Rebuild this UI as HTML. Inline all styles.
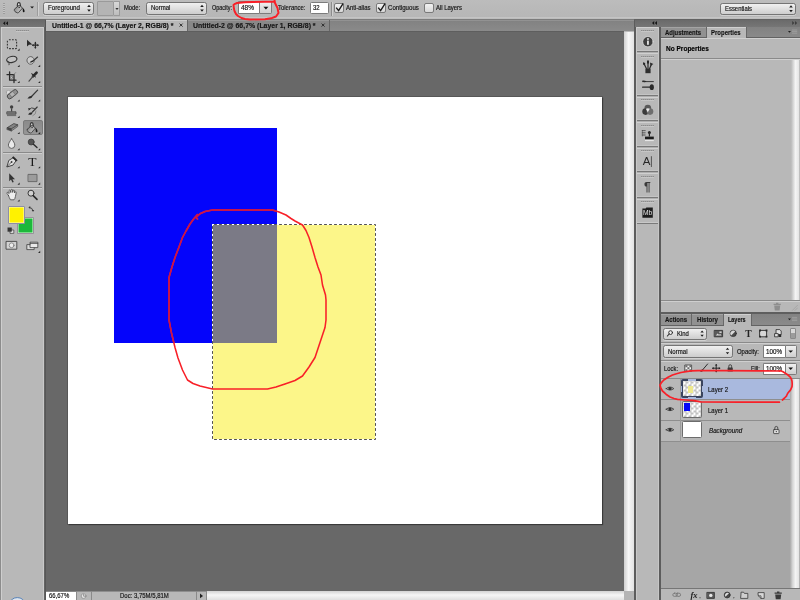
<!DOCTYPE html>
<html lang="en">
<head>
<meta charset="utf-8">
<title>Photoshop - paint bucket opacity</title>
<style>
html,body{margin:0;padding:0;}
body{width:800px;height:600px;overflow:hidden;background:#b8b8b8;font-family:"Liberation Sans",sans-serif;}
#app{position:relative;width:800px;height:600px;overflow:hidden;background:#b8b8b8;}
#app div{position:absolute;box-sizing:border-box;}
#app #texts{position:absolute;}
#icons,#annot{position:absolute;left:0;top:0;pointer-events:none;}
.t{-webkit-text-stroke:0.17px currentColor;position:absolute;white-space:pre;line-height:normal;transform-origin:0 50%;font-family:"Liberation Sans",sans-serif;}
.sel{border:1px solid #757575;border-radius:2.5px;background:linear-gradient(#f0f0f0,#cdcdcd);box-shadow:0 1px 0 rgba(255,255,255,.35);}
.inp{border:1px solid #7c7c7c;border-right:none;background:#fff;border-radius:1.5px 0 0 1.5px;}
.btn{border:1px solid #7c7c7c;background:linear-gradient(#f0f0f0,#cfcfcf);border-radius:0 1.5px 1.5px 0;}
.chk{border:1px solid #7a7a7a;border-radius:2px;background:linear-gradient(#f2f2f2,#d6d6d6);}
.hdr{background:linear-gradient(#6a6a6a,#767676);}
.tabbar{background:linear-gradient(#828282,#8a8a8a);}
.tab{background:#888;}
.tab.on{background:#b8b8b8;}
.vsep{background:#8c8c8c;width:1px;box-shadow:1px 0 0 #d0d0d0;}
.hsep{background:#8a8a8a;height:1px;box-shadow:0 1px 0 #cfcfcf;}
.grip{height:1px;background:repeating-linear-gradient(90deg,#8c8c8c 0 1.5px,#a2a2a2 1.5px 2px);box-shadow:0 1px 0 #c6c6c6;}
.vscroll{background:linear-gradient(90deg,#cfcfcf,#f6f6f6 45%,#e2e2e2);}
.hscroll{background:linear-gradient(#d4d4d4,#f6f6f6 45%,#e0e0e0);}
.dock{background:#b8b8b8;border-top:1px solid #d0d0d0;}
.thumb{border:1px solid #6c6c6c;border-radius:1.5px;background:#fff;}
.checker{background:conic-gradient(#c2c2c2 25%,#fff 0 50%,#c2c2c2 0 75%,#fff 0) 0.5px 0.5px/5px 5px;}
.t.b{-webkit-text-stroke:0.16px currentColor;}
#texts{position:absolute;left:0;top:0;width:800px;height:600px;filter:blur(0.3px);}
#icons{filter:blur(0.35px);}
#annot{filter:blur(0.3px);}

</style>
</head>
<body>
<div id="app">
<!-- ===== options bar ===== -->
<div id="optbar" style="left:0;top:0;width:800px;height:18px;background:linear-gradient(#bcbcbc,#b6b6b6);"></div>
<div style="left:0;top:17px;width:800px;height:1px;background:#c4c4c4;"></div>
<div style="left:0;top:18px;width:800px;height:1px;background:#bdbdbd;"></div>
<div style="left:0;top:19px;width:800px;height:1px;background:#7c7c7c;"></div>
<div style="left:0;top:19px;width:46px;height:1px;background:#6a6a6a;"></div>
<div style="left:634px;top:19px;width:166px;height:1px;background:#626262;"></div>
<div class="grip" style="left:3px;top:3px;width:2px;height:11px;background:repeating-linear-gradient(#9c9c9c 0 1px,#c4c4c4 1px 2px);box-shadow:none;"></div>
<div class="vsep" style="left:37px;top:2px;height:14px;background:#9c9c9c;"></div>
<div class="sel" style="left:42.5px;top:2px;width:51.5px;height:13px;"></div>
<div style="left:97px;top:1px;width:17px;height:15px;border:1px solid #9a9a9a;background:#b4b4b4;border-radius:1px;"></div>
<div style="left:114px;top:1px;width:6px;height:15px;border:1px solid #9a9a9a;border-left:none;background:linear-gradient(#d8d8d8,#bdbdbd);border-radius:0 1px 1px 0;"></div>
<div class="sel" style="left:146px;top:2px;width:61px;height:13px;"></div>
<div class="inp" style="left:238px;top:1px;width:21px;height:13px;"></div>
<div class="btn" style="left:259px;top:1px;width:13px;height:13px;"></div>
<div class="inp" style="left:310px;top:2px;width:19px;height:12px;border-right:1px solid #7c7c7c;border-radius:1.5px;"></div>
<div class="vsep" style="left:331px;top:2px;height:14px;"></div>
<div class="chk" style="left:334px;top:3px;width:10px;height:10px;"></div>
<div class="chk" style="left:376px;top:3px;width:10px;height:10px;"></div>
<div class="chk" style="left:424px;top:3px;width:10px;height:10px;"></div>
<div class="sel" style="left:720px;top:3px;width:76px;height:12px;"></div>

<!-- ===== document tab bar ===== -->
<div class="tabbar" style="left:46px;top:20px;width:588px;height:11px;border-top:1px solid #929292;"></div>
<div class="tab on" style="left:46px;top:20px;width:141px;height:11px;border-top:1px solid #cdcdcd;"></div>
<div class="tab" style="left:188px;top:20px;width:141px;height:11px;border-top:1px solid #9a9a9a;"></div>
<div style="left:187px;top:20px;width:1px;height:11px;background:#666;"></div>
<div style="left:329px;top:20px;width:1px;height:11px;background:#666;"></div>

<!-- ===== document area ===== -->
<div id="doc" style="left:46px;top:31px;width:578px;height:560px;background:#686868;"></div>
<div style="left:46px;top:31px;width:578px;height:1px;background:#5e5e5e;"></div>
<div id="canvas" style="left:68px;top:97px;width:534px;height:427px;background:#fff;box-shadow:0 0 0 1px rgba(50,50,50,.3),1px 1px 1px rgba(0,0,0,.4);"></div>
<div id="blue" style="left:114px;top:128px;width:163px;height:215px;background:#0404fb;"></div>
<div id="yellow" style="left:212px;top:224px;width:163px;height:215px;background:#fcf689;"></div>
<div id="overlap" style="left:212px;top:224px;width:65px;height:119px;background:#7b7a86;"></div>

<!-- scrollbars + status bar -->
<div class="vscroll" style="left:624px;top:32px;width:10px;height:559px;"></div>
<div style="left:46px;top:591px;width:588px;height:9px;background:#b8b8b8;border-top:1px solid #8e8e8e;"></div>
<div style="left:46px;top:591px;width:30px;height:9px;background:#fff;border-top:1px solid #888;"></div>
<div style="left:76px;top:591px;width:1px;height:9px;background:#8a8a8a;"></div>
<div style="left:91px;top:591px;width:1px;height:9px;background:#8a8a8a;"></div>
<div style="left:196px;top:591px;width:1px;height:9px;background:#8a8a8a;"></div>
<div style="left:206px;top:591px;width:1px;height:9px;background:#8a8a8a;"></div>
<div class="hscroll" style="left:207px;top:591px;width:417px;height:9px;"></div>
<div style="left:624px;top:591px;width:10px;height:9px;background:#b4b4b4;"></div>

<!-- ===== toolbox ===== -->
<div id="toolbox" style="left:0;top:20px;width:44px;height:580px;background:#b8b8b8;border-left:1px solid #8c8c8c;"></div>
<div style="left:44px;top:20px;width:2px;height:580px;background:linear-gradient(90deg,#6e6e6e,#555 60%,#5a5a5a);"></div>
<div style="left:1px;top:27px;width:43px;height:1px;background:#cdcdcd;"></div>
<div style="left:1px;top:27px;width:1px;height:573px;background:#cecece;"></div>
<div style="left:43px;top:27px;width:1px;height:573px;background:#c9c9c9;"></div>
<div class="hdr" style="left:0;top:20px;width:45px;height:7px;"></div>
<div class="grip" style="left:16px;top:30px;width:13px;"></div>
<div class="hsep" style="left:3px;top:86px;width:39px;"></div>
<div class="hsep" style="left:3px;top:152px;width:39px;"></div>
<div class="hsep" style="left:3px;top:187px;width:39px;"></div>
<div id="toolsel" style="left:23px;top:120px;width:20px;height:15px;background:linear-gradient(#8a8a8a,#969696);border:1px solid #7a7a7a;border-radius:2px;"></div>
<div style="left:17px;top:216.5px;width:17px;height:17px;background:#1db83b;border:1px solid #9a8f9c;border-radius:1px;box-shadow:inset 0 0 0 0.5px #d8ffd8;"></div>
<div style="left:8px;top:206px;width:17px;height:17.5px;background:#fff200;border:1px solid #8d8da8;border-radius:1px;box-shadow:inset 0 0 0 0.5px #ffffc0;"></div>

<!-- ===== icon dock ===== -->
<div style="left:634px;top:20px;width:2px;height:580px;background:linear-gradient(90deg,#5c5c5c 0 75%,#8a8a8a);"></div>
<div style="left:636px;top:27px;width:1px;height:573px;background:#c8c8c8;z-index:1;"></div>
<div style="left:658px;top:27px;width:1px;height:573px;background:#c6c6c6;z-index:1;"></div>
<div style="left:636px;top:20px;width:23px;height:580px;background:#b8b8b8;"></div>
<div class="hdr" style="left:635px;top:20px;width:165px;height:7px;"></div>
<div style="left:659px;top:27px;width:2px;height:573px;background:linear-gradient(90deg,#5c5c5c 0 75%,#8a8a8a);"></div>
<div class="dock" style="left:636px;top:27px;width:23px;height:24px;"></div>
<div style="left:636px;top:51px;width:23px;height:2px;background:linear-gradient(#787878 0 50%,#aeaeae 50% 100%);box-shadow:0 -1px 0 #c4c4c4;"></div>
<div class="dock" style="left:636px;top:53px;width:23px;height:42px;"></div>
<div style="left:636px;top:95px;width:23px;height:2px;background:linear-gradient(#787878 0 50%,#aeaeae 50% 100%);box-shadow:0 -1px 0 #c4c4c4;"></div>
<div class="dock" style="left:636px;top:97px;width:23px;height:23px;"></div>
<div style="left:636px;top:120px;width:23px;height:2px;background:linear-gradient(#787878 0 50%,#aeaeae 50% 100%);box-shadow:0 -1px 0 #c4c4c4;"></div>
<div class="dock" style="left:636px;top:122px;width:23px;height:24px;"></div>
<div style="left:636px;top:146px;width:23px;height:2px;background:linear-gradient(#787878 0 50%,#aeaeae 50% 100%);box-shadow:0 -1px 0 #c4c4c4;"></div>
<div class="dock" style="left:636px;top:148px;width:23px;height:23px;"></div>
<div style="left:636px;top:171px;width:23px;height:2px;background:linear-gradient(#787878 0 50%,#aeaeae 50% 100%);box-shadow:0 -1px 0 #c4c4c4;"></div>
<div class="dock" style="left:636px;top:173px;width:23px;height:24px;"></div>
<div style="left:636px;top:197px;width:23px;height:2px;background:linear-gradient(#787878 0 50%,#aeaeae 50% 100%);box-shadow:0 -1px 0 #c4c4c4;"></div>
<div class="dock" style="left:636px;top:199px;width:23px;height:24px;"></div>
<div style="left:636px;top:223px;width:23px;height:1px;background:#7a7a7a;box-shadow:0 -1px 0 #c8c8c8;"></div>
<div class="grip" style="left:641px;top:30px;width:13px;"></div>
<div class="grip" style="left:641px;top:56px;width:13px;"></div>
<div class="grip" style="left:641px;top:99px;width:13px;"></div>
<div class="grip" style="left:641px;top:125px;width:13px;"></div>
<div class="grip" style="left:641px;top:150px;width:13px;"></div>
<div class="grip" style="left:641px;top:176px;width:13px;"></div>
<div class="grip" style="left:641px;top:201px;width:13px;"></div>

<!-- ===== properties panel ===== -->
<div style="left:661px;top:27px;width:139px;height:286px;background:#b8b8b8;"></div>
<div class="tabbar" style="left:661px;top:27px;width:139px;height:10px;"></div>
<div class="tab" style="left:661px;top:27px;width:46px;height:10px;background:#919191;border-top:1px solid #a4a4a4;"></div>
<div class="tab on" style="left:707px;top:27px;width:39px;height:11px;border-top:1px solid #d0d0d0;"></div>
<div style="left:706px;top:27px;width:1px;height:10px;background:#686868;"></div>
<div style="left:745.5px;top:27px;width:1px;height:10px;background:#686868;"></div>
<div style="left:661px;top:37px;width:46px;height:1px;background:#636363;"></div>
<div style="left:746px;top:37px;width:54px;height:1px;background:#636363;"></div>
<div style="left:661px;top:38px;width:139px;height:1px;background:#d0d0d0;"></div>
<div class="hsep" style="left:661px;top:58px;width:139px;"></div>
<div class="vscroll" style="left:791px;top:60px;width:9px;height:240px;background:linear-gradient(90deg,#b8b8b8,#f4f4f4 50%,#e6e6e6 85%,#a8a8a8);"></div>
<div class="hsep" style="left:661px;top:300px;width:139px;"></div>
<div style="left:661px;top:312px;width:139px;height:2px;background:#5e5e5e;"></div>

<!-- ===== layers panel ===== -->
<div style="left:661px;top:314px;width:139px;height:286px;background:#b8b8b8;"></div>
<div class="tabbar" style="left:661px;top:314px;width:139px;height:11px;"></div>
<div class="tab" style="left:661px;top:314px;width:30px;height:11px;background:#919191;border-top:1px solid #a4a4a4;"></div>
<div class="tab" style="left:692px;top:314px;width:32px;height:11px;background:#919191;border-top:1px solid #a4a4a4;"></div>
<div class="tab on" style="left:724px;top:314px;width:27px;height:12px;border-top:1px solid #d0d0d0;"></div>
<div style="left:691px;top:314px;width:1px;height:11px;background:#686868;"></div>
<div style="left:723px;top:314px;width:1px;height:11px;background:#686868;"></div>
<div style="left:750.5px;top:314px;width:1px;height:11px;background:#686868;"></div>
<div style="left:661px;top:325px;width:63px;height:1px;background:#636363;"></div>
<div style="left:751px;top:325px;width:49px;height:1px;background:#636363;"></div>
<div class="sel" style="left:663px;top:328px;width:44px;height:12px;"></div>
<div style="left:790px;top:328px;width:6px;height:11px;border:1px solid #8a8a8a;border-radius:1px;background:linear-gradient(#d8d8d8 0 45%,#9c9c9c 50% 100%);"></div>
<div class="hsep" style="left:661px;top:342px;width:139px;"></div>
<div class="sel" style="left:663px;top:345px;width:70px;height:13px;"></div>
<div class="inp" style="left:763px;top:345px;width:21.5px;height:13px;"></div>
<div class="btn" style="left:784.5px;top:345px;width:12.5px;height:13px;"></div>
<div class="hsep" style="left:661px;top:360px;width:139px;"></div>
<div class="inp" style="left:763px;top:362.5px;width:21.5px;height:12.5px;"></div>
<div class="btn" style="left:784.5px;top:362.5px;width:12.5px;height:12.5px;"></div>
<div style="left:661px;top:377.5px;width:139px;height:1px;background:#8a8a8a;"></div>
<!-- rows -->
<div style="left:661px;top:378.5px;width:130px;height:63px;background:#b8b8b8;"></div>
<div style="left:680px;top:378.5px;width:110px;height:20.5px;background:#a9b9de;"></div>
<div style="left:661px;top:399px;width:130px;height:1px;background:#8e8e8e;"></div>
<div style="left:661px;top:420px;width:130px;height:1px;background:#8e8e8e;"></div>
<div style="left:661px;top:441px;width:130px;height:1px;background:#8e8e8e;"></div>
<div style="left:679.5px;top:378.5px;width:1px;height:63px;background:#9c9c9c;"></div>
<div style="left:661px;top:442px;width:130px;height:146px;background:#a6a6a6;"></div>
<div class="vscroll" style="left:790px;top:379px;width:10px;height:209px;background:linear-gradient(90deg,#a8a8a8,#d4d4d4 25%,#f4f4f4 55%,#e6e6e6 85%,#9a9a9a);"></div>
<div style="left:661px;top:588px;width:139px;height:1px;background:#767676;"></div>
<div style="left:661px;top:589px;width:139px;height:11px;background:#b8b8b8;"></div>
<!-- thumbnails -->
<div class="thumb checker" style="left:680.5px;top:379px;width:22.5px;height:19px;border:2px solid #3a445e;border-radius:2px;"></div>
<div style="left:688px;top:379px;width:8px;height:1.5px;background:#a9b9de;"></div>
<div style="left:688px;top:396.5px;width:8px;height:1.5px;background:#a9b9de;"></div>
<div style="left:680.5px;top:385.5px;width:1.5px;height:6px;background:#a9b9de;"></div>
<div style="left:701.5px;top:385.5px;width:1.5px;height:6px;background:#a9b9de;"></div>
<div style="left:687.5px;top:385.7px;width:5.5px;height:7.3px;background:#efe98e;"></div>
<div class="thumb checker" style="left:681.5px;top:401px;width:20.5px;height:17px;"></div>
<div style="left:684px;top:403.2px;width:6px;height:7.5px;background:#0606f6;"></div>
<div class="thumb" style="left:681.5px;top:421.2px;width:20.5px;height:17.3px;"></div>

<div id="texts">
<span class="t" style="left:48.0px;top:4.0px;font-size:6.8px;color:#141414;transform:scaleX(0.911)">Foreground</span>
<span class="t" style="left:124.4px;top:4.0px;font-size:6.8px;color:#141414;transform:scaleX(0.858)">Mode:</span>
<span class="t" style="left:150.6px;top:4.0px;font-size:6.8px;color:#141414;transform:scaleX(0.886)">Normal</span>
<span class="t" style="left:212.0px;top:4.0px;font-size:6.8px;color:#141414;transform:scaleX(0.802)">Opacity:</span>
<span class="t" style="left:241.0px;top:4.0px;font-size:6.8px;color:#141414;transform:scaleX(0.955)">48%</span>
<span class="t" style="left:277.5px;top:4.0px;font-size:6.8px;color:#141414;transform:scaleX(0.877)">Tolerance:</span>
<span class="t" style="left:313.0px;top:4.0px;font-size:6.8px;color:#141414;transform:scaleX(0.873)">32</span>
<span class="t" style="left:346.0px;top:4.0px;font-size:6.8px;color:#141414;transform:scaleX(0.880)">Anti-alias</span>
<span class="t" style="left:388.0px;top:4.0px;font-size:6.8px;color:#141414;transform:scaleX(0.896)">Contiguous</span>
<span class="t" style="left:436.0px;top:4.0px;font-size:6.8px;color:#141414;transform:scaleX(0.871)">All Layers</span>
<span class="t" style="left:725.0px;top:5.0px;font-size:6.8px;color:#141414;transform:scaleX(0.871)">Essentials</span>
<span class="t b" style="left:52.0px;top:21.8px;font-size:7px;font-weight:bold;color:#141414;transform:scaleX(0.980)">Untitled-1 @ 66,7% (Layer 2, RGB/8) *</span>
<span class="t b" style="left:193.0px;top:21.8px;font-size:7px;font-weight:bold;color:#161616;transform:scaleX(0.989)">Untitled-2 @ 66,7% (Layer 1, RGB/8) *</span>
<span class="t b" style="left:665.0px;top:28.5px;font-size:7px;font-weight:bold;color:#161616;transform:scaleX(0.849)">Adjustments</span>
<span class="t b" style="left:711.0px;top:28.5px;font-size:7px;font-weight:bold;color:#141414;transform:scaleX(0.855)">Properties</span>
<span class="t b" style="left:666.0px;top:45.0px;font-size:7px;font-weight:bold;color:#000;transform:scaleX(0.932)">No Properties</span>
<span class="t b" style="left:665.0px;top:316.3px;font-size:7px;font-weight:bold;color:#161616;transform:scaleX(0.857)">Actions</span>
<span class="t b" style="left:697.0px;top:316.3px;font-size:7px;font-weight:bold;color:#161616;transform:scaleX(0.870)">History</span>
<span class="t b" style="left:728.0px;top:316.3px;font-size:7px;font-weight:bold;color:#141414;transform:scaleX(0.780)">Layers</span>
<span class="t" style="left:677.0px;top:330.0px;font-size:6.8px;color:#141414;transform:scaleX(0.867)">Kind</span>
<span class="t" style="left:668.0px;top:347.5px;font-size:6.8px;color:#141414;transform:scaleX(0.890)">Normal</span>
<span class="t" style="left:737.0px;top:347.5px;font-size:6.8px;color:#141414;transform:scaleX(0.874)">Opacity:</span>
<span class="t" style="left:766.0px;top:347.5px;font-size:6.8px;color:#141414;transform:scaleX(0.920)">100%</span>
<span class="t" style="left:664.0px;top:365.0px;font-size:6.8px;color:#141414;transform:scaleX(0.862)">Lock:</span>
<span class="t" style="left:750.6px;top:364.5px;font-size:6.8px;color:#141414;transform:scaleX(0.832)">Fill:</span>
<span class="t" style="left:766.0px;top:364.5px;font-size:6.8px;color:#141414;transform:scaleX(0.920)">100%</span>
<span class="t" style="left:708.0px;top:385.9px;font-size:6.8px;color:#141414;transform:scaleX(0.882)">Layer 2</span>
<span class="t" style="left:708.0px;top:406.5px;font-size:6.8px;color:#141414;transform:scaleX(0.882)">Layer 1</span>
<span class="t" style="left:708.8px;top:427.1px;font-size:6.8px;font-style:italic;color:#141414;transform:scaleX(0.915)">Background</span>
<span class="t" style="left:48.8px;top:592.1px;font-size:6.8px;color:#141414;transform:scaleX(0.876)">66,67%</span>
<span class="t" style="left:120.0px;top:592.1px;font-size:6.8px;color:#141414;transform:scaleX(0.879)">Doc: 3,75M/5,81M</span>
</div>
<svg id="icons" width="800" height="600" viewBox="0 0 800 600">
<linearGradient id="bk" x1="0" y1="0" x2="1" y2="0.6"><stop offset="0" stop-color="#6e6e6e"/><stop offset="0.55" stop-color="#a8a8a8"/><stop offset="1" stop-color="#c8c8c8"/></linearGradient>
<!-- ================= OPTIONS BAR ICONS ================= -->
<g id="opt-icons">
  <!-- paint bucket (tool preset) -->
  <g transform="translate(13.5,1.5)">
    <path d="M0.9 7.7 L5.1 4.1 Q5.9 3.7 6.5 4.3 L8.5 5.9 Q8.9 6.5 8.5 7.1 L5.1 11.1 Q4.5 11.5 3.7 11.3 L1.5 10.1 Q0.5 9.1 0.9 7.7 Z" fill="url(#bk)" stroke="#3c3c3c" stroke-width="0.9"/>
    <path d="M3.7 4.9 L4.1 1.9 Q5.3 0.1 6.5 1.7 L7.1 4.5" fill="none" stroke="#333" stroke-width="1.1"/>
    <path d="M4.5 3.4 L5.1 2 L5.9 3.4 Z" fill="#e4e4e4"/>
    <circle cx="5.7" cy="5.9" r="0.7" fill="#2a2a2a"/>
    <path d="M8.3 5.9 Q11.1 6.9 11.1 9.9 Q10.9 10.9 9.9 10.7 Q8.9 10.1 9.3 8.5 Q9.5 7.1 8.3 5.9 Z" fill="#111"/>
  </g>
  <path d="M30.2 6.5 h3.8 l-1.9 2.1 z" fill="#1a1a1a"/>
  <!-- select arrows -->
  <path d="M87.2 7 l1.8 -2.2 l1.8 2.2 z M87.2 9.6 l1.8 2.2 l1.8 -2.2 z" fill="#1c1c1c"/>
  <path d="M115.4 8 h3.2 l-1.6 2 z" fill="#333"/>
  <path d="M200.2 7 l1.8 -2.2 l1.8 2.2 z M200.2 9.6 l1.8 2.2 l1.8 -2.2 z" fill="#1c1c1c"/>
  <path d="M263.4 6.8 h5 l-2.5 2.6 z" fill="#111"/>
  <path d="M789.2 7.4 l1.8 -2.2 l1.8 2.2 z M789.2 10 l1.8 2.2 l1.8 -2.2 z" fill="#1c1c1c"/>
  <!-- check marks -->
  <path d="M336.2 7.6 L338.6 10.6 L343.2 3.4" fill="none" stroke="#1a1a1a" stroke-width="1.4"/>
  <path d="M378.2 7.6 L380.6 10.6 L385.2 3.4" fill="none" stroke="#1a1a1a" stroke-width="1.4"/>
  <!-- tab close x -->
  <path d="M179.6 23.6 l3 3 m0 -3 l-3 3" stroke="#222" stroke-width="0.9" fill="none"/>
  <path d="M321.6 23.6 l3 3 m0 -3 l-3 3" stroke="#222" stroke-width="0.9" fill="none"/>
  <!-- collapse chevrons -->
  <path d="M5.2 21.2 l-2.2 2 l2.2 2 z M8 21.2 l-2.2 2 l2.2 2 z" fill="#161616"/>
  <path d="M654.2 21 l-2.2 2 l2.2 2 z M657 21 l-2.2 2 l2.2 2 z" fill="#161616"/>
  <path d="M792.2 21 l2.2 2 l-2.2 2 z M795 21 l2.2 2 l-2.2 2 z" fill="#3e3e3e"/>
</g>
<!-- ================= TOOLBOX ICONS ================= -->
<g id="tool-icons" stroke-linecap="round" stroke-linejoin="round" opacity="0.9">
  <!-- flyout triangles -->
  <g fill="#1a1a1a">
    <path d="M19.6 48.6 v2.1 h-2.1 z"/><path d="M19.6 64.8 v2.1 h-2.1 z"/><path d="M40.2 64.8 v2.1 h-2.1 z"/>
    <path d="M19.6 81.0 v2.1 h-2.1 z"/><path d="M40.2 81.0 v2.1 h-2.1 z"/>
    <path d="M19.6 99.4 v2.1 h-2.1 z"/><path d="M40.2 99.4 v2.1 h-2.1 z"/>
    <path d="M19.6 115.8 v2.1 h-2.1 z"/><path d="M40.2 115.8 v2.1 h-2.1 z"/>
    <path d="M19.6 132.0 v2.1 h-2.1 z"/><path d="M40.2 132.0 v2.1 h-2.1 z"/>
    <path d="M19.6 148.2 v2.1 h-2.1 z"/><path d="M40.2 148.2 v2.1 h-2.1 z"/>
    <path d="M19.6 166.2 v2.1 h-2.1 z"/><path d="M40.2 166.2 v2.1 h-2.1 z"/>
    <path d="M19.6 182.6 v2.1 h-2.1 z"/><path d="M40.2 182.6 v2.1 h-2.1 z"/>
    <path d="M19.6 199.4 v2.1 h-2.1 z"/><path d="M40.2 250.8 v2.1 h-2.1 z"/>
  </g>
  <!-- 1 marquee -->
  <rect x="7.4" y="39.8" width="9.2" height="8.8" rx="1" fill="none" stroke="#262626" stroke-width="1.1" stroke-dasharray="1.7 1.3" stroke-dashoffset="-0.6" stroke-linecap="butt"/>
  <!-- 2 move -->
  <path d="M27 39.8 L27 46.4 L29 44.8 L32.4 44.6 Z" fill="#1c1c1c"/>
  <path d="M35.4 42.4 v5.6 M32.6 45.2 h5.6" stroke="#1c1c1c" stroke-width="1.2" fill="none"/>
  <path d="M34.2 43.4 l1.2 -1.5 l1.2 1.5 z M34.2 47 l1.2 1.5 l1.2 -1.5 z M33.6 44 l-1.5 1.2 l1.5 1.2 z M37.2 44 l1.5 1.2 l-1.5 1.2 z" fill="#1c1c1c"/>
  <!-- 3 lasso -->
  <ellipse cx="11.8" cy="59.4" rx="5.2" ry="3" fill="#c4c4c4" stroke="#262626" stroke-width="1.2" transform="rotate(-12 11.8 59.4)"/>
  <path d="M8.2 61.4 Q7.2 62.8 8.6 63 Q10 63.2 9 64.8" fill="none" stroke="#2a2a2a" stroke-width="0.9"/>
  <!-- 4 quick select -->
  <ellipse cx="30.6" cy="60.4" rx="3.6" ry="3.8" fill="#cfcfcf" stroke="#333" stroke-width="0.8" stroke-dasharray="1.6 0.9"/>
  <path d="M37.6 57 L33 61" stroke="#2a2a2a" stroke-width="1.1" fill="none"/>
  <path d="M29.6 62.4 Q31 60.2 33.6 60.6 Q33.4 63 29.6 62.4 Z" fill="#1c1c1c"/>
  <!-- 5 crop -->
  <path d="M9.6 72 V80.2 H16 M7 74.6 H14 V82.6" fill="none" stroke="#1c1c1c" stroke-width="1.3"/>
  <path d="M15.6 72.6 L11.6 76.8" stroke="#555" stroke-width="0.6" fill="none"/>
  <circle cx="11.8" cy="77.4" r="1.1" fill="#ddd" stroke="#444" stroke-width="0.5"/>
  <!-- 6 eyedropper -->
  <path d="M36.6 72.6 L33 76.4" stroke="#1a1a1a" stroke-width="2.6" fill="none"/>
  <path d="M34.6 75.2 L31.6 73.8 M35.6 77 L32.4 74.4" stroke="#1a1a1a" stroke-width="1" fill="none"/>
  <path d="M33 76.4 L29 81.2" stroke="#3a3a3a" stroke-width="1.2" fill="none"/>
  <!-- 7 healing brush -->
  <path d="M6.4 92.2 Q6 90.2 8.6 90.4 L10.6 91.4 L8.2 96.2 Q6.6 95 6.4 92.2 Z" fill="#e6e6e6" stroke="#888" stroke-width="0.5"/>
  <g transform="rotate(-38 12.4 94.2)">
    <rect x="6.6" y="91.8" width="11.6" height="4.8" rx="2.2" fill="#8d8d8d" stroke="#3a3a3a" stroke-width="0.9"/>
    <rect x="10.4" y="92.2" width="4" height="4" fill="#b4b4b4" stroke="#555" stroke-width="0.4"/>
  </g>
  <!-- 8 brush -->
  <path d="M37.6 90.2 L32 96" stroke="#2a2a2a" stroke-width="1.2" fill="none"/>
  <path d="M27.4 98.4 Q29 95.6 32.2 95.8 Q32.6 99.2 27.4 98.4 Z" fill="#1c1c1c"/>
  <!-- 9 clone stamp -->
  <circle cx="11.6" cy="107" r="1.7" fill="#333"/>
  <path d="M11 108.4 h1.2 v3 h-1.2 z" fill="#333"/>
  <path d="M7.2 111.8 h8.8 v2.4 h-8.8 z" fill="#7a7a7a" stroke="#333" stroke-width="0.8"/>
  <path d="M7.4 115.6 h8.4" stroke="#555" stroke-width="0.9"/>
  <!-- 10 history brush -->
  <path d="M37.2 107 L32.4 112" stroke="#2a2a2a" stroke-width="1.1" fill="none"/>
  <path d="M28 114.6 Q29.4 112 32.4 112.2 Q32.6 115.4 28 114.6 Z" fill="#1c1c1c"/>
  <path d="M29 109.6 Q31.4 106.6 34.4 108.4" fill="none" stroke="#2a2a2a" stroke-width="0.9"/>
  <path d="M28.2 108 l2.4 0.6 l-1.8 1.8 z" fill="#1c1c1c"/>
  <path d="M36 111 Q36.2 114.6 32.8 115.8" fill="none" stroke="#666" stroke-width="0.6"/>
  <!-- 11 eraser -->
  <path d="M7.4 127.6 L13.8 123.6 L17.8 124.8 L11.6 128.8 Z" fill="#7e7e7e" stroke="#333" stroke-width="0.8"/>
  <path d="M7.4 127.6 L11.6 128.8 L11.4 131 L7.2 129.6 Z" fill="#3a3a3a" stroke="#333" stroke-width="0.6"/>
  <path d="M11.6 128.8 L17.8 124.8 L17.6 126.6 L11.4 131 Z" fill="#8a8a8a" stroke="#333" stroke-width="0.6"/>
  <!-- 12 paint bucket (selected) -->
  <g transform="translate(26.4,121.6)">
    <path d="M0.9 7.7 L5.1 4.1 Q5.9 3.7 6.5 4.3 L8.5 5.9 Q8.9 6.5 8.5 7.1 L5.1 11.1 Q4.5 11.5 3.7 11.3 L1.5 10.1 Q0.5 9.1 0.9 7.7 Z" fill="url(#bk)" stroke="#3c3c3c" stroke-width="0.9"/>
    <path d="M3.7 4.9 L4.1 1.9 Q5.3 0.1 6.5 1.7 L7.1 4.5" fill="none" stroke="#333" stroke-width="1.1"/>
    <path d="M4.5 3.4 L5.1 2 L5.9 3.4 Z" fill="#e4e4e4"/>
    <circle cx="5.7" cy="5.9" r="0.7" fill="#2a2a2a"/>
    <path d="M8.3 5.9 Q11.1 6.9 11.1 9.9 Q10.9 10.9 9.9 10.7 Q8.9 10.1 9.3 8.5 Q9.5 7.1 8.3 5.9 Z" fill="#111"/>
  </g>
  <!-- 13 blur -->
  <path d="M11.6 138.8 C9.8 141.4 8.4 143.4 8.4 145.2 A3.2 3.2 0 0 0 14.8 145.2 C14.8 143.4 13.4 141.4 11.6 138.8 Z" fill="#f0f0f0" stroke="#4a4a4a" stroke-width="0.9"/>
  <!-- 14 dodge -->
  <circle cx="31.2" cy="142" r="3" fill="#4a4a4a" stroke="#262626" stroke-width="0.7"/>
  <path d="M33.4 144.2 L37 147.6" stroke="#1c1c1c" stroke-width="1.4" fill="none"/>
  <!-- 15 pen -->
  <path d="M7 166.6 L8.8 160.4 L13 157.8 L16 160.8 L13.2 164.8 Z" fill="#e4e4e4" stroke="#2a2a2a" stroke-width="0.9"/>
  <path d="M13.4 156.2 L17.6 160.2 L16.2 161.6 L12 157.6 Z" fill="#1a1a1a"/>
  <path d="M7.2 166.4 L11.4 162.2" stroke="#2a2a2a" stroke-width="0.7" fill="none"/>
  <circle cx="11.6" cy="162" r="0.9" fill="#2a2a2a"/>
  <!-- 17 path selection -->
  <path d="M9.2 173.2 L9.2 181.2 L11 179.6 L12.4 182.6 L13.8 182 L12.4 179.2 L15 179.2 Z" fill="#262626"/>
  <!-- 18 rectangle -->
  <rect x="28.4" y="174.4" width="8.6" height="7.2" fill="#9a9a9a" stroke="#5a5a5a" stroke-width="0.9"/>
  <!-- 19 hand -->
  <path d="M8.4 195.4 L7 193.4 Q6.6 192.2 7.8 192.4 L9.2 193.6 L9 190.6 Q9.6 189.6 10.4 190.6 L10.8 192.6 L11 189.8 Q11.8 188.8 12.6 189.8 L12.6 192.4 L13.2 190.4 Q14 189.6 14.6 190.6 L14.4 193 L15.4 191.8 Q16.4 191.6 16.2 192.8 L15.4 196.6 Q15 198.8 14 199.8 L10.4 199.8 Q9.2 197.6 8.4 195.4 Z" fill="#f4f4f4" stroke="#3a3a3a" stroke-width="0.8"/>
  <!-- 20 zoom -->
  <circle cx="31" cy="193.2" r="3" fill="#d4d4d4" stroke="#2a2a2a" stroke-width="1"/>
  <path d="M33.2 195.6 L37 199.4" stroke="#1a1a1a" stroke-width="1.6" fill="none"/>
  <!-- swap colours -->
  <path d="M29.4 207.4 Q32.6 207.6 33 210.8" fill="none" stroke="#2a2a2a" stroke-width="0.9"/>
  <path d="M28.4 207.4 l1.8 -1.3 v2.6 z M33 211.8 l-1.3 -1.8 h2.6 z" fill="#2a2a2a"/>
  <!-- default colours -->
  <rect x="10.4" y="230" width="3.4" height="3.4" fill="#e8e8e8" stroke="#333" stroke-width="0.7"/>
  <rect x="8" y="227.8" width="3.6" height="3.6" fill="#2a2a2a" stroke="#2a2a2a" stroke-width="0.5"/>
  <!-- quick mask -->
  <rect x="6.4" y="241.4" width="10.4" height="7.8" fill="#d6d6d6" stroke="#3a3a3a" stroke-width="0.9"/>
  <circle cx="11.6" cy="245.3" r="2.4" fill="#f2f2f2" stroke="#666" stroke-width="0.7"/>
  <!-- screen mode -->
  <rect x="27.2" y="244.6" width="7" height="5" fill="#e0e0e0" stroke="#333" stroke-width="0.8"/>
  <rect x="30.4" y="242.2" width="7.4" height="5.4" fill="#efefef" stroke="#333" stroke-width="0.8"/>
  <path d="M30.4 243.4 h7.4" stroke="#333" stroke-width="0.8"/>
  <!-- peeking ellipse bottom-left -->
  <ellipse cx="17.4" cy="602.6" rx="7" ry="5" fill="#e4eaf4" stroke="#3a6fb0" stroke-width="0.9"/>
</g>
<text x="32.4" y="166.4" text-anchor="middle" font-family="'Liberation Serif',serif" font-size="13.5" fill="#1a1a1a">T</text>
<!-- ================= DOCK ICONS ================= -->
<g id="dock-icons" stroke-linecap="round" stroke-linejoin="round">
  <circle cx="647.9" cy="41.7" r="5" fill="#3e3e3e"/>
  <circle cx="647.9" cy="41.7" r="5.2" fill="none" stroke="#d6d6d6" stroke-width="0.8" opacity=".9"/>
  <rect x="647.1" y="40.6" width="1.7" height="4.2" fill="#f0f0f0"/>
  <rect x="647.1" y="38.2" width="1.7" height="1.6" fill="#f0f0f0"/>
  <!-- brush presets -->
  <path d="M645.4 68.6 h5.2 v4.6 h-5.2 z" fill="#2e2e2e"/>
  <path d="M646.4 68.4 L644.4 64.4 M648 68.4 L648 63 M649.6 68.4 L651.2 65" stroke="#2a2a2a" stroke-width="1.2" fill="none"/>
  <path d="M643 62.2 l2.2 0.8 l-0.2 2.4 l-2 -1 z M647 60.6 h2 v3 h-2 z M650 62.4 l3.4 1.6 l-3 2 z" fill="#2a2a2a"/>
  <!-- brush -->
  <path d="M642.6 81.6 H653.4" stroke="#2a2a2a" stroke-width="0.9" fill="none"/>
  <path d="M642.4 80.6 Q644.6 80 646.6 81.6 Q644.6 82.8 642.4 81.6 Z" fill="#2a2a2a"/>
  <path d="M642.6 87.2 H650" stroke="#2a2a2a" stroke-width="1.2" fill="none"/>
  <ellipse cx="651.8" cy="87.2" rx="2.1" ry="2.9" fill="#2a2a2a"/>
  <!-- color -->
  <circle cx="647.8" cy="108" r="3.3" fill="#5a5a5a"/>
  <circle cx="645.6" cy="111.6" r="3.3" fill="#3a3a3a"/>
  <circle cx="650" cy="111.6" r="3.3" fill="#6e6e6e"/>
  <path d="M645.8 108.8 Q647.8 107.6 649.8 108.8 L647.8 112.2 Z" fill="#e8e8e8"/>
  <!-- clone source -->
  <path d="M642.2 130.6 h3 M642.2 132.8 h3 M642.2 135 h3" stroke="#444" stroke-width="0.8" fill="none" stroke-dasharray="0.8 0.6"/>
  <path d="M642.4 130.4 v6" stroke="#444" stroke-width="0.6" stroke-dasharray="0.8 0.8" fill="none"/>
  <circle cx="649.4" cy="132.4" r="1.5" fill="#262626"/>
  <path d="M648.8 133.6 h1.2 v3 h-1.2 z" fill="#262626"/>
  <path d="M645 136.6 h8.8 v2.6 h-8.8 z" fill="#1c1c1c"/>
  <path d="M645.4 140.6 h8" stroke="#f0f0f0" stroke-width="0.9"/>
  <!-- A| cursor line -->
  <path d="M651.4 156.6 v10" stroke="#2a2a2a" stroke-width="0.7" fill="none"/>
  <!-- Mb -->
  <path d="M642.4 208.4 h3.2 l0.8 -1 h6.4 v10.4 h-10.4 z" fill="#1c1c1c"/>
</g>
<text x="646.6" y="164.8" text-anchor="middle" font-family="'Liberation Sans',sans-serif" font-size="11.5" fill="#262626">A</text>
<text x="647.4" y="190.8" text-anchor="middle" font-family="'Liberation Sans',sans-serif" font-weight="bold" font-size="12" fill="#3a3a3a">¶</text>
<text x="647.6" y="215.4" text-anchor="middle" font-family="'Liberation Sans',sans-serif" font-size="6.6" fill="#e8e8e8">Mb</text>

<!-- ================= PANEL ICONS ================= -->
<g id="panel-icons" stroke-linecap="round" stroke-linejoin="round">
  <!-- panel menus -->
  <path d="M788 31 h3 l-1.5 1.8 z" fill="#1e1e1e"/>
  <path d="M792.4 30 h4.4 M792.4 31.6 h4.4 M792.4 33.2 h4.4" stroke="#a2a2a2" stroke-width="0.8" fill="none"/>
  <path d="M788 318.4 h3 l-1.5 1.8 z" fill="#1e1e1e"/>
  <path d="M792.4 317.4 h4.4 M792.4 319 h4.4 M792.4 320.6 h4.4" stroke="#a2a2a2" stroke-width="0.8" fill="none"/>
  <!-- properties footer: trash + grip -->
  <g fill="#8e8e8e" stroke="none">
    <path d="M774.2 305.6 h6 l-0.6 5 h-4.8 z"/>
    <path d="M773.6 303.8 h7.2 v1.2 h-7.2 z M776 302.8 h2.4 v1 h-2.4 z"/>
  </g>
  <path d="M797.4 305.4 L792.4 310.4 M797.4 308 L795 310.4" stroke="#9e9e9e" stroke-width="0.7" fill="none"/>
  <!-- kind filter: magnifier + arrows -->
  <circle cx="670.6" cy="332.6" r="1.9" fill="#eee" stroke="#2a2a2a" stroke-width="0.9"/>
  <path d="M669.2 334 L667.4 336" stroke="#2a2a2a" stroke-width="1.1" fill="none"/>
  <path d="M700.4 332.6 l1.7 -2 l1.7 2 z M700.4 334.8 l1.7 2 l1.7 -2 z" fill="#1c1c1c"/>
  <!-- filter icons -->
  <rect x="714.6" y="330.4" width="8" height="6.4" fill="#5a5a5a" stroke="#333" stroke-width="0.9"/>
  <path d="M715.8 335.6 l1.8 -2.2 l1.4 1.4 l1.2 -0.8 l1.4 1.6 z" fill="#d8d8d8"/>
  <rect x="719.4" y="331.4" width="2.2" height="1.6" fill="#cfcfcf"/>
  <circle cx="733.2" cy="333.4" r="3.2" fill="#4a4a4a" stroke="#2a2a2a" stroke-width="0.6"/>
  <path d="M731.2 335.4 A2.8 2.8 0 0 1 735.2 331.4 Z" fill="#d8d8d8"/>
  <rect x="760" y="330.4" width="6.6" height="6.4" fill="#d6d6d6" stroke="#2a2a2a" stroke-width="0.9"/>
  <path d="M759.2 329.6 h1.8 v1.8 h-1.8 z M765.6 329.6 h1.8 v1.8 h-1.8 z M759.2 335.8 h1.8 v1.8 h-1.8 z M765.6 335.8 h1.8 v1.8 h-1.8 z" fill="#2a2a2a"/>
  <path d="M776.4 329.6 h3.4 l1.4 1.4 v3.6 h-4.8 z" fill="#e2e2e2" stroke="#2a2a2a" stroke-width="0.8"/>
  <rect x="775" y="333.6" width="3.2" height="3.2" fill="#e2e2e2" stroke="#2a2a2a" stroke-width="0.8"/>
  <rect x="778.6" y="334.4" width="2.6" height="2.6" fill="#2a2a2a"/>
  <!-- blend mode arrows, opacity/fill arrows -->
  <path d="M725.8 349.8 l1.7 -2 l1.7 2 z M725.8 352.2 l1.7 2 l1.7 -2 z" fill="#1c1c1c"/>
  <path d="M788.4 350.4 h4.6 l-2.3 2.4 z" fill="#111"/>
  <path d="M788.4 367.6 h4.6 l-2.3 2.4 z" fill="#111"/>
  <!-- lock icons -->
  <rect x="685.2" y="365" width="6.4" height="6.4" fill="#f4f4f4" stroke="#3a3a3a" stroke-width="0.8"/>
  <path d="M685.4 365.2 h2 v2 h-2 z M689.4 365.2 h2 v2 h-2 z M687.4 367.2 h2 v2 h-2 z M685.4 369.2 h2 v2 h-2 z M689.4 369.2 h2 v2 h-2 z" fill="#6a6a6a"/>
  <path d="M707.6 364 L703 369.4" stroke="#2a2a2a" stroke-width="1" fill="none"/>
  <path d="M700.2 371.6 Q701.2 369.2 703.4 369.2 Q703.6 372 700.2 371.6 Z" fill="#1c1c1c"/>
  <path d="M716.2 364.6 v7.2 M712.6 368.2 h7.2" stroke="#1c1c1c" stroke-width="0.9" fill="none"/>
  <path d="M715 365.6 l1.2 -1.5 l1.2 1.5 z M715 370.8 l1.2 1.5 l1.2 -1.5 z M713.6 367 l-1.5 1.2 l1.5 1.2 z M718.8 367 l1.5 1.2 l-1.5 1.2 z" fill="#1c1c1c"/>
  <rect x="727.6" y="367.6" width="5.2" height="4" rx="0.5" fill="#3a3a3a"/>
  <path d="M728.8 367.6 v-1.4 a1.4 1.5 0 0 1 2.8 0 v1.4" fill="none" stroke="#3a3a3a" stroke-width="0.9"/>
  <!-- eyes -->
  <g id="eye1">
    <path d="M666.2 388.6 Q670 385.4 673.8 388.6 Q670 391.6 666.2 388.6 Z" fill="#c4c4c4" stroke="#3c3c3c" stroke-width="0.9"/>
    <circle cx="670" cy="388.5" r="1.6" fill="#303030"/>
  </g>
  <g id="eye2">
    <path d="M666.2 409.2 Q670 406.0 673.8 409.2 Q670 412.2 666.2 409.2 Z" fill="#c4c4c4" stroke="#3c3c3c" stroke-width="0.9"/>
    <circle cx="670" cy="409.1" r="1.6" fill="#303030"/>
  </g>
  <g id="eye3">
    <path d="M666.2 429.8 Q670 426.6 673.8 429.8 Q670 432.8 666.2 429.8 Z" fill="#c4c4c4" stroke="#3c3c3c" stroke-width="0.9"/>
    <circle cx="670" cy="429.7" r="1.6" fill="#303030"/>
  </g>
  <!-- background lock -->
  <rect x="773.6" y="429.6" width="5.4" height="4" rx="0.5" fill="#e0e0e0" stroke="#3a3a3a" stroke-width="0.8"/>
  <path d="M774.8 429.6 v-1.6 a1.5 1.6 0 0 1 3 0 v1.6" fill="none" stroke="#3a3a3a" stroke-width="0.8"/>
  <circle cx="776.3" cy="431.6" r="0.6" fill="#2a2a2a"/>
  <!-- bottom toolbar -->
  <rect x="672.8" y="593.2" width="4.6" height="3.2" rx="1.6" fill="none" stroke="#787878" stroke-width="0.9"/>
  <rect x="676" y="593.2" width="4.6" height="3.2" rx="1.6" fill="none" stroke="#787878" stroke-width="0.9"/>
  <path d="M699.2 597.6 h1.6 l-0.8 1 z" fill="#1c1c1c"/>
  <rect x="707.2" y="592.4" width="7.2" height="6" fill="#5a5a5a" stroke="#2e2e2e" stroke-width="0.8"/>
  <circle cx="710.8" cy="595.4" r="1.7" fill="#e8e8e8"/>
  <circle cx="727.2" cy="595" r="3" fill="#4a4a4a" stroke="#2a2a2a" stroke-width="0.6"/>
  <path d="M725.4 596.8 A2.6 2.6 0 0 1 729 593.2 Z" fill="#e0e0e0"/>
  <path d="M733 597.6 h1.6 l-0.8 1 z" fill="#1c1c1c"/>
  <path d="M741 593.6 v-1.4 h2.6 l0.8 1.2 h3.4 v5 h-6.8 z" fill="#cfcfcf" stroke="#3a3a3a" stroke-width="0.8"/>
  <path d="M758.4 592.6 h5.8 v5.8 h-3.2 l-2.6 -2.6 z" fill="#d8d8d8" stroke="#3a3a3a" stroke-width="0.8"/>
  <path d="M758.4 595.8 h2.6 v2.6" fill="none" stroke="#3a3a3a" stroke-width="0.7"/>
  <g fill="#3a3a3a">
    <path d="M775.2 594.4 h6 l-0.6 4.8 h-4.8 z"/>
    <path d="M774.6 592.6 h7.2 v1.2 h-7.2 z M777 591.6 h2.4 v1 h-2.4 z"/>
  </g>
  <!-- status bar icons -->
  <circle cx="83.6" cy="596" r="2.4" fill="#e4e4e4" stroke="#7a7a7a" stroke-width="0.6"/>
  <path d="M83.6 594.4 v1.8 h1.6" stroke="#666" stroke-width="0.6" fill="none"/>
  <path d="M200 593.6 v4.6 l3 -2.3 z" fill="#222"/>
</g>
<text x="748.4" y="336.8" text-anchor="middle" font-family="'Liberation Serif',serif" font-weight="bold" font-size="9.6" fill="#222">T</text>
<text x="690.4" y="597.8" font-family="'Liberation Serif',serif" font-style="italic" font-weight="bold" font-size="8.5" fill="#1c1c1c">fx</text>

</svg>
<svg id="annot" width="800" height="600" viewBox="0 0 800 600">
<!-- marching ants selection -->
<rect x="212.5" y="224.5" width="163" height="215" fill="none" stroke="#fff" stroke-width="1"/>
<rect x="212.5" y="224.5" width="163" height="215" fill="none" stroke="#3a3a3a" stroke-width="0.9" stroke-dasharray="2.8 2.2" stroke-dashoffset="3.4"/>
<clipPath id="clipblue"><rect x="114" y="128" width="163" height="96"/><rect x="114" y="224" width="98" height="119"/></clipPath>
<!-- hand drawn red annotations -->
<g fill="none" stroke="#f82028" stroke-width="1.7" stroke-linecap="round" stroke-linejoin="round">
<path d="M197.5 219 L196 217.5 L200 213.8 L205 211.5 L212.5 210 L272.5 210 L279 212 L286 215 L291 218.5 L295 221 L302.5 225 L306 230.5 L309 237.5 L312 247 L315 257.5 L318 267 L321 275 L322.5 285 L325.5 295 L326 300 L326 320 L325 327.5 L320 342.5 L315 357.5 L309 367 L302.5 376 L295 380.5 L285 384 L276 387 L267.5 389 L212.5 389 L200 386 L193 383.5 L187.5 380 L182.5 370 L178 358 L175 347.5 L171.5 333 L169 320 L169 300 L169 277.5 L172 267 L175 257.5 L179 247 L182.5 237.5 L186 231 L190 224 L194 218.5 L197.5 214.5" stroke-width="1.55"/>
<path d="M197.5 219 L196 217.5 L200 213.8 L205 211.5 L212.5 210 L272.5 210 L279 212 L286 215 L291 218.5 L295 221 L302.5 225 L306 230.5 L309 237.5 L312 247 L315 257.5 L318 267 L321 275 L322.5 285 L325.5 295 L326 300 L326 320 L325 327.5 L320 342.5 L315 357.5 L309 367 L302.5 376 L295 380.5 L285 384 L276 387 L267.5 389 L212.5 389 L200 386 L193 383.5 L187.5 380 L182.5 370 L178 358 L175 347.5 L171.5 333 L169 320 L169 300 L169 277.5 L172 267 L175 257.5 L179 247 L182.5 237.5 L186 231 L190 224 L194 218.5 L197.5 214.5" stroke-width="1.55" stroke="#cb1448" clip-path="url(#clipblue)"/>
<path stroke-width="1.95" d="M274.5 0 L275 3 L277.5 8 L278.5 13 L276 16.5 L271 18.3 L265 19.2 L250 19.5 L245 19 L241.5 18 L238 16 L236 14 L234.5 11 L234 9 L233.5 5 L235 3.8 L237 3 L245 2.3 L253 2 L265 1.8 L274.5 1.5"/>
<path d="M779.4 371 L760 370.8 L725 370.7 L698 370.7 L691 370.8 L686 371.6 L681 372.5 L676.5 373.8 L672.5 375 L668 377.2 L663.8 380 L661.4 382.6 L660 385 L660.8 388 L662.5 391 L666 394.2 L670 397 L674 398.5 L677.5 399.4 L686 400 L693.8 400.6 L698 401.4 L701 402 L740 402.2 L779.4 402.2"/>
<path d="M779.4 371 L780.7 370.8 L783 371.8 L785.3 373.3 L788 375 L790 376.8 L791.4 379 L792 381.3 L792.2 384 L792 386.7 L791 389 L790 390.7 L788.6 392.2 L787.7 393.3 L786.9 395 L786.4 396.2 L784.6 398 L782.4 400"/>
</g>

</svg>
</div>
</body>
</html>
